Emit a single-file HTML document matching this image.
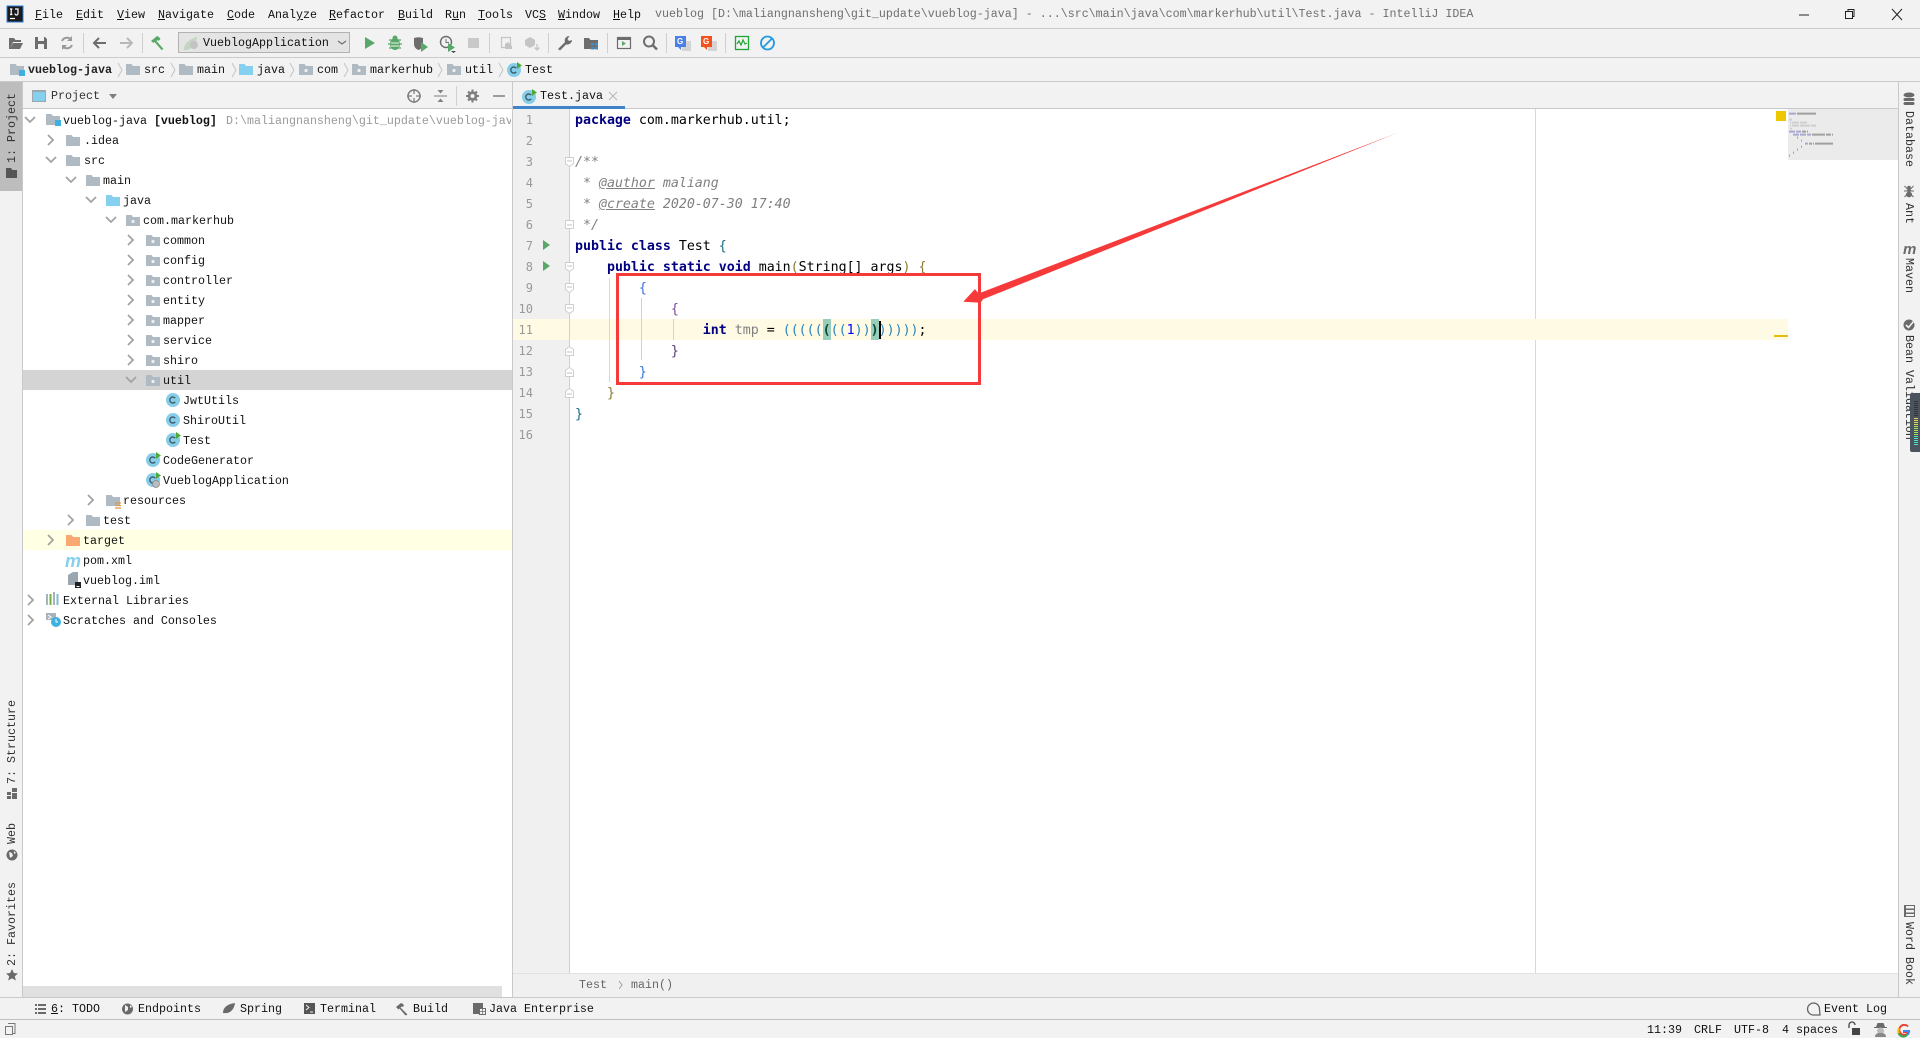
<!DOCTYPE html>
<html><head><meta charset="utf-8"><title>IntelliJ IDEA</title>
<style>
html,body{margin:0;padding:0;width:1920px;height:1038px;overflow:hidden;background:#f2f2f2}
body{position:relative;font:11.67px/20px "Liberation Mono",monospace;color:#111}
.b{position:absolute}
.t{position:absolute;white-space:pre;line-height:20px;height:20px}
.c{position:absolute;left:575px;white-space:pre;font:13.28px/21px "DejaVu Sans Mono",monospace;color:#000;height:21px}
.n{position:absolute;width:20px;left:513px;text-align:right;font:12px/21px "DejaVu Sans Mono",monospace;color:#999;height:21px}
.k{color:#000080;font-weight:bold}
.d{color:#808080;font-style:italic}
.g{color:#808080;font-style:italic;text-decoration:underline}
.v{position:absolute;white-space:pre;writing-mode:vertical-rl;line-height:16px;width:16px}
.l{transform:rotate(180deg)}
u{text-underline-offset:1px}
svg{position:absolute;left:0;top:0}
</style></head><body>
<!-- bands -->
<div class="b" style="left:0;top:28px;width:1920px;height:1px;background:#cacaca"></div>
<div class="b" style="left:0;top:57px;width:1920px;height:1px;background:#cacaca"></div>
<div class="b" style="left:0;top:81px;width:1920px;height:1px;background:#cacaca"></div>
<div class="b" style="left:0;top:82px;width:22px;height:109px;background:#bdbdbd"></div>
<div class="b" style="left:22px;top:82px;width:1px;height:915px;background:#c9c9c9"></div>
<div class="b" style="left:23px;top:109px;width:489px;height:888px;background:#fff"></div>
<div class="b" style="left:23px;top:108px;width:1875px;height:1px;background:#c9c9c9"></div>
<div class="b" style="left:512px;top:82px;width:1px;height:915px;background:#c9c9c9"></div>
<div class="b" style="left:1898px;top:82px;width:1px;height:915px;background:#c9c9c9"></div>
<div class="b" style="left:23px;top:370px;width:489px;height:20px;background:#d4d4d4"></div>
<div class="b" style="left:23px;top:530px;width:489px;height:20px;background:#ffffe4"></div>
<div class="b" style="left:23px;top:986px;width:479px;height:11px;background:#e0e0e0"></div>
<!-- editor -->
<div class="b" style="left:513px;top:109px;width:1385px;height:864px;background:#fff"></div>
<div class="b" style="left:513px;top:109px;width:56px;height:864px;background:#f0f0f0"></div>
<div class="b" style="left:569px;top:109px;width:1px;height:864px;background:#d0d0d0"></div>
<div class="b" style="left:1535px;top:109px;width:1px;height:864px;background:#d8d8d8"></div>
<div class="b" style="left:513px;top:319px;width:1275px;height:21px;background:#fffae3"></div>
<div class="b" style="left:569px;top:319px;width:1px;height:21px;background:#d0d0d0"></div>
<div class="b" style="left:513px;top:973px;width:1385px;height:24px;background:#f0f0f0;border-top:1px solid #e2e2e2;box-sizing:border-box"></div>
<div class="b" style="left:0;top:997px;width:1920px;height:1px;background:#c9c9c9"></div>
<div class="b" style="left:0;top:1019px;width:1920px;height:1px;background:#c0c0c0"></div>
<!-- tab -->
<div class="b" style="left:513px;top:106px;width:112px;height:3px;background:#4083c9"></div>
<!-- combo -->
<div class="b" style="left:178px;top:32px;width:172px;height:21px;background:#e4e4e4;border:1px solid #b2b2b2;box-sizing:border-box"></div>
<!-- brace highlights, guides, minimap base -->
<div class="b" style="left:823px;top:319px;width:8px;height:21px;background:#99ccbb"></div>
<div class="b" style="left:871px;top:319px;width:8px;height:21px;background:#99ccbb"></div>
<div class="b" style="left:609px;top:278px;width:1px;height:104px;background:#d8d8d8"></div>
<div class="b" style="left:641px;top:298px;width:1px;height:62px;background:#c5d3e2"></div>
<div class="b" style="left:673px;top:319px;width:1px;height:21px;background:#d4d4c8"></div>
<div class="b" style="left:1788px;top:109px;width:110px;height:51px;background:#ebebeb"></div>
<div class="b" style="left:1776px;top:111px;width:10px;height:10px;background:#edc800"></div>
<div class="b" style="left:1774px;top:335px;width:14px;height:2px;background:#e6bd0e"></div>

<!-- title bar -->
<div class="t" style="left:35px;top:5px"><u>F</u>ile</div>
<div class="t" style="left:76px;top:5px"><u>E</u>dit</div>
<div class="t" style="left:117px;top:5px"><u>V</u>iew</div>
<div class="t" style="left:158px;top:5px"><u>N</u>avigate</div>
<div class="t" style="left:227px;top:5px"><u>C</u>ode</div>
<div class="t" style="left:268px;top:5px">Anal<u>y</u>ze</div>
<div class="t" style="left:329px;top:5px"><u>R</u>efactor</div>
<div class="t" style="left:398px;top:5px"><u>B</u>uild</div>
<div class="t" style="left:445px;top:5px">R<u>u</u>n</div>
<div class="t" style="left:478px;top:5px"><u>T</u>ools</div>
<div class="t" style="left:525px;top:5px">VC<u>S</u></div>
<div class="t" style="left:558px;top:5px"><u>W</u>indow</div>
<div class="t" style="left:613px;top:5px"><u>H</u>elp</div>
<div class="t" style="left:655px;top:4px;color:#6f6f6f">vueblog [D:\maliangnansheng\git_update\vueblog-java] - ...\src\main\java\com\markerhub\util\Test.java - IntelliJ IDEA</div>

<!-- combo text -->
<div class="t" style="left:203px;top:33px">VueblogApplication</div>

<!-- nav bar -->
<div class="t" style="left:28px;top:60px;font-weight:bold;color:#222">vueblog-java</div>
<div class="t" style="left:144px;top:60px">src</div>
<div class="t" style="left:197px;top:60px">main</div>
<div class="t" style="left:257px;top:60px">java</div>
<div class="t" style="left:317px;top:60px">com</div>
<div class="t" style="left:370px;top:60px">markerhub</div>
<div class="t" style="left:465px;top:60px">util</div>
<div class="t" style="left:525px;top:60px">Test</div>

<!-- project header -->
<div class="t" style="left:51px;top:86px;color:#333">Project</div>
<div class="t" style="left:540px;top:86px">Test.java</div>

<!-- tree -->
<div class="b" style="left:0;top:1px">
<div class="t" style="left:63px;top:110px">vueblog-java <b>[vueblog]</b></div>
<div class="t" style="left:226px;top:110px;width:285px;overflow:hidden;color:#9a9a9a">D:\maliangnansheng\git_update\vueblog-java</div>
<div class="t" style="left:84px;top:130px">.idea</div>
<div class="t" style="left:84px;top:150px">src</div>
<div class="t" style="left:103px;top:170px">main</div>
<div class="t" style="left:123px;top:190px">java</div>
<div class="t" style="left:143px;top:210px">com.markerhub</div>
<div class="t" style="left:163px;top:230px">common</div>
<div class="t" style="left:163px;top:250px">config</div>
<div class="t" style="left:163px;top:270px">controller</div>
<div class="t" style="left:163px;top:290px">entity</div>
<div class="t" style="left:163px;top:310px">mapper</div>
<div class="t" style="left:163px;top:330px">service</div>
<div class="t" style="left:163px;top:350px">shiro</div>
<div class="t" style="left:163px;top:370px">util</div>
<div class="t" style="left:183px;top:390px">JwtUtils</div>
<div class="t" style="left:183px;top:410px">ShiroUtil</div>
<div class="t" style="left:183px;top:430px">Test</div>
<div class="t" style="left:163px;top:450px">CodeGenerator</div>
<div class="t" style="left:163px;top:470px">VueblogApplication</div>
<div class="t" style="left:123px;top:490px">resources</div>
<div class="t" style="left:103px;top:510px">test</div>
<div class="t" style="left:83px;top:530px">target</div>
<div class="t" style="left:83px;top:550px">pom.xml</div>
<div class="t" style="left:83px;top:570px">vueblog.iml</div>
<div class="t" style="left:63px;top:590px">External Libraries</div>
<div class="t" style="left:63px;top:610px">Scratches and Consoles</div>
</div>

<!-- gutter numbers -->
<div class="n" style="top:110px">1</div>
<div class="n" style="top:131px">2</div>
<div class="n" style="top:152px">3</div>
<div class="n" style="top:173px">4</div>
<div class="n" style="top:194px">5</div>
<div class="n" style="top:215px">6</div>
<div class="n" style="top:236px">7</div>
<div class="n" style="top:257px">8</div>
<div class="n" style="top:278px">9</div>
<div class="n" style="top:299px">10</div>
<div class="n" style="top:320px">11</div>
<div class="n" style="top:341px">12</div>
<div class="n" style="top:362px">13</div>
<div class="n" style="top:383px">14</div>
<div class="n" style="top:404px">15</div>
<div class="n" style="top:425px">16</div>

<!-- code -->
<div class="b" style="left:0;top:1px">
<div class="c" style="top:109px"><span class="k">package</span> com.markerhub.util;</div>
<div class="c" style="top:151px"><span class="d">/**</span></div>
<div class="c" style="top:172px"><span class="d"> * </span><span class="g">@author</span><span class="d"> maliang</span></div>
<div class="c" style="top:193px"><span class="d"> * </span><span class="g">@create</span><span class="d"> 2020-07-30 17:40</span></div>
<div class="c" style="top:214px"><span class="d"> */</span></div>
<div class="c" style="top:235px"><span class="k">public class</span> Test <span style="color:#1b6a86">{</span></div>
<div class="c" style="top:256px">    <span class="k">public static void</span> main<span style="color:#8a7a30">(</span>String[] args<span style="color:#8a7a30">)</span> <span style="color:#8a7a30">{</span></div>
<div class="c" style="top:277px">        <span style="color:#3a70d8">{</span></div>
<div class="c" style="top:298px">            <span style="color:#7a4a9a">{</span></div>
<div class="c" style="top:319px">                <span class="k">int</span> <span style="color:#808080">tmp</span> = <span style="color:#2b84bd">(((((</span><b style="color:#0b4a3a">(</b><span style="color:#2b84bd">((</span><span style="color:#0000ff">1</span><span style="color:#2b84bd">))</span><b style="color:#0b4a3a">)</b><span style="color:#2b84bd">)))))</span>;</div>
<div class="c" style="top:340px">            <span style="color:#5a3a7a">}</span></div>
<div class="c" style="top:361px">        <span style="color:#3a70d8">}</span></div>
<div class="c" style="top:382px">    <span style="color:#8a7a30">}</span></div>
<div class="c" style="top:403px"><span style="color:#1b6a86">}</span></div>
</div>
<div class="b" style="left:879px;top:321px;width:2px;height:18px;background:#000"></div>

<!-- breadcrumb -->
<div class="t" style="left:579px;top:975px;color:#666">Test</div>
<div class="t" style="left:631px;top:975px;color:#666">main()</div>

<!-- bottom tool bar -->
<div class="t" style="left:51px;top:999px"><u>6</u>: TODO</div>
<div class="t" style="left:138px;top:999px">Endpoints</div>
<div class="t" style="left:240px;top:999px">Spring</div>
<div class="t" style="left:320px;top:999px">Terminal</div>
<div class="t" style="left:413px;top:999px">Build</div>
<div class="t" style="left:489px;top:999px">Java Enterprise</div>
<div class="t" style="left:1824px;top:999px">Event Log</div>

<!-- status -->
<div class="t" style="left:1647px;top:1020px">11:39</div>
<div class="t" style="left:1694px;top:1020px">CRLF</div>
<div class="t" style="left:1734px;top:1020px">UTF-8</div>
<div class="t" style="left:1782px;top:1020px">4 spaces</div>

<!-- left vertical -->
<div class="v l" style="left:4px;top:93px;color:#333">1: Project</div>
<div class="v l" style="left:4px;top:700px;color:#333">7: Structure</div>
<div class="v l" style="left:4px;top:823px;color:#333">Web</div>
<div class="v l" style="left:4px;top:882px;color:#333">2: Favorites</div>

<!-- right vertical -->
<div class="v" style="left:1901px;top:111px;color:#333">Database</div>
<div class="v" style="left:1901px;top:203px;color:#333">Ant</div>
<div class="v" style="left:1901px;top:258px;color:#333">Maven</div>
<div class="v" style="left:1901px;top:335px;color:#333">Bean Validation</div>
<div class="v" style="left:1901px;top:922px;color:#333">Word Book</div>

<svg width="1920" height="1038" viewBox="0 0 1920 1038">
<defs>
<path id="f" d="M0 0h5.5L7 2h7v9H0z" fill="#b0bac2"/>
<g id="p"><path d="M0 0h5.5L7 2h7v9H0z" fill="#b0bac2"/><circle cx="7" cy="6.5" r="1.6" fill="#f0f0f0"/></g>
<path id="j" d="M0 0h5.5L7 2h7v9H0z" fill="#85d0ee"/>
<g id="m"><path d="M0 0h5.5L7 2h7v9H0z" fill="#b0bac2"/><rect x="9" y="6" width="6" height="6" fill="#3eb1e0"/></g>
<path id="ar" d="M0 0l5 5-5 5" fill="none" stroke="#a3a3a3" stroke-width="1.8"/>
<path id="ad" d="M0 0l5 5 5-5" fill="none" stroke="#a3a3a3" stroke-width="1.8"/>
<path id="ch" d="M0 0l4 7-4 7" fill="none" stroke="#c4c4c4" stroke-width="1"/>
<g id="c"><circle cx="7" cy="7" r="7" fill="#86cde9"/><path d="M9.2 5.2A3 3 0 1 0 9.2 8.8" fill="none" stroke="#3f5d6b" stroke-width="1.4"/></g>
<g id="r"><circle cx="7" cy="7" r="7" fill="#86cde9"/><path d="M9.2 5.2A3 3 0 1 0 9.2 8.8" fill="none" stroke="#3f5d6b" stroke-width="1.4"/><path d="M10-1l5 3.5-5 3.500z" fill="#4eaa3a"/></g>
</defs>

<!-- app logo -->
<rect x="7" y="6" width="16" height="16" fill="#1b1b1b" stroke="#2e7bd6" stroke-width="1"/>
<path d="M10 9h2.4M11.2 9v5.5M10 14.5h2.4M15 9h3v4.5a1.3 1.3 0 0 1-3 0M10 18.5h5" stroke="#fff" stroke-width="1.2" fill="none"/>
<!-- window controls -->
<path d="M1799 15h10" stroke="#222" stroke-width="1"/>
<path d="M1845.500 11.500h7v7h-7zM1848 11V9.500h6v7h-1.500" fill="none" stroke="#222"/>
<path d="M1892 9l10 11M1902 9l-10 11" stroke="#222"/>

<!-- toolbar -->
<path d="M9 38h5l1.500 2H21v2H13l-3 7H9zM13 43h10l-3 6H10z" fill="#6d6d6d"/>
<path d="M35 37h10l2 2v10H35z" fill="#6d6d6d"/><rect x="38" y="37" width="6" height="4" fill="#f2f2f2"/><rect x="38" y="44" width="6" height="5" fill="#f2f2f2"/>
<path d="M71.500 40a5.500 5.500 0 0 0-9.500 1M62.500 46a5.500 5.500 0 0 0 9.500-1" fill="none" stroke="#9a9a9a" stroke-width="2"/><path d="M72 36v5h-5zM62 50v-5h5z" fill="#9a9a9a"/>
<rect x="83" y="33" width="1" height="20" fill="#cfcfcf"/>
<path d="M106 43H94M99 38l-5 5 5 5" fill="none" stroke="#6d6d6d" stroke-width="2"/>
<path d="M120 43h12M127 38l5 5-5 5" fill="none" stroke="#b8b8b8" stroke-width="2"/>
<rect x="142" y="33" width="1" height="20" fill="#cfcfcf"/>
<path d="M151 41l6-5 2 1 1.500 2-2 2-1-1-1 1 7 8-2 1-7-8-1 1z" fill="#59a869"/>
<!-- combo icon -->
<path d="M184 50c0-7 6-11 13-13-1 8-5 13-13 13z" fill="#c2d6c2"/><circle cx="194" cy="45" r="4" fill="#c4c4c4"/>
<path d="M338 41l4 3 4-3" fill="none" stroke="#707070" stroke-width="1.200"/>
<path d="M365 37l10 6-10 6z" fill="#59a869"/>
<ellipse cx="395" cy="44" rx="5" ry="6" fill="#59a869"/><circle cx="395" cy="38" r="2.500" fill="#59a869"/><path d="M389 40l12 0M388 44h14M389 48h12" stroke="#59a869" stroke-width="1.300"/><path d="M391 43h8M391 46h8" stroke="#f2f2f2"/>
<path d="M414 38c3-1 6-1 9 0v6c0 3-2 5-4.500 6-2.500-1-4.500-3-4.500-6z" fill="#6d6d6d"/><path d="M421 42l7 5-7 5z" fill="#59a869"/>
<circle cx="446" cy="42" r="5.500" fill="none" stroke="#6d6d6d" stroke-width="1.400"/><path d="M446 39v3.500h3" stroke="#6d6d6d" fill="none"/><path d="M448 43l7 4.500-7 4.500z" fill="#59a869"/><path d="M451 51h5l-2.500 2z" fill="#444"/>
<rect x="468" y="38" width="11" height="10" fill="#c9c9c9"/>
<rect x="489" y="33" width="1" height="20" fill="#cfcfcf"/>
<path d="M501.500 37.500h9v10h-9z" fill="none" stroke="#c4c4c4" stroke-width="1.200"/><path d="M505 44l3-2 4 4v3h-7z" fill="#c4c4c4"/>
<path d="M525 40l5-3 5 3v5l-5 3-5-3z" fill="#c4c4c4"/><path d="M537 44v6m-2.500-2.500 2.500 2.500 2.500-2.500" stroke="#c4c4c4" fill="none" stroke-width="1.300"/>
<rect x="548" y="33" width="1" height="20" fill="#cfcfcf"/>
<path d="M558 49l7-7c-1-3 1-6 4.500-6l-2 3 1.500 2 3-1c0 3-3 5-6 4.500l-6 6z" fill="#6d6d6d"/>
<path d="M584 38h5l1.500 2H598v9h-14z" fill="#6d6d6d"/><path d="M591 43h3v2.500h-3zM595 43h3v2.500h-3zM591 47h3v2.500h-3zM595 47h3v2.500h-3z" fill="#3c8fd0"/>
<rect x="607" y="33" width="1" height="20" fill="#cfcfcf"/>
<rect x="617.500" y="37.500" width="13" height="11" fill="none" stroke="#6d6d6d" stroke-width="1.200"/><path d="M617 39h14" stroke="#6d6d6d" stroke-width="2"/><path d="M622 41l4 2.500-4 2.500z" fill="#59a869"/>
<circle cx="649" cy="41.500" r="5" fill="none" stroke="#6d6d6d" stroke-width="2"/><path d="M652.500 45l4.500 4.500" stroke="#6d6d6d" stroke-width="2.500"/>
<rect x="666" y="33" width="1" height="20" fill="#cfcfcf"/>
<rect x="682" y="41" width="9" height="10" fill="#d4d4d4"/><path d="M675 36h11v11h-5v3l-3-3h-3z" fill="#4a80e8"/><text x="677" y="44" font-family="Liberation Sans,sans-serif" font-size="8" font-weight="bold" fill="#fff">G</text>
<rect x="708" y="41" width="9" height="10" fill="#d4d4d4"/><path d="M701 36h11v11h-5v3l-3-3h-3z" fill="#f4511e"/><text x="703" y="44" font-family="Liberation Sans,sans-serif" font-size="8" font-weight="bold" fill="#fff">G</text>
<rect x="725" y="33" width="1" height="20" fill="#cfcfcf"/>
<rect x="735.500" y="36.500" width="13" height="13" fill="none" stroke="#1fa637" stroke-width="1.300"/><path d="M737 44l2-3 2 4 2-5 2 4 2-1" fill="none" stroke="#1fa637" stroke-width="1.200"/>
<circle cx="767.500" cy="43" r="6.500" fill="none" stroke="#1e9ae0" stroke-width="1.800"/><path d="M763 47.500l9-9" stroke="#1e9ae0" stroke-width="1.800"/>

<!-- nav icons -->
<use href="#m" x="10" y="64"/><use href="#ch" x="118" y="63"/>
<use href="#f" x="126" y="64"/><use href="#ch" x="171" y="63"/>
<use href="#f" x="179" y="64"/><use href="#ch" x="232" y="63"/>
<use href="#j" x="239" y="64"/><use href="#ch" x="290" y="63"/>
<use href="#p" x="299" y="64"/><use href="#ch" x="344" y="63"/>
<use href="#p" x="352" y="64"/><use href="#ch" x="438" y="63"/>
<use href="#p" x="447" y="64"/><use href="#ch" x="499" y="63"/>
<use href="#r" x="507" y="63"/>

<!-- project header icons -->
<rect x="32.500" y="90.500" width="13" height="11" fill="#85d0ee" stroke="#9aa7b0"/><rect x="33" y="90" width="12" height="2" fill="#9aa7b0"/>
<path d="M109 94h8l-4 5z" fill="#7f7f7f"/>
<circle cx="414" cy="96" r="6" fill="none" stroke="#7f7f7f" stroke-width="1.500"/><path d="M414 89v5M414 98v5M407 96h5M416 96h5" stroke="#7f7f7f" stroke-width="1.300"/>
<path d="M434 96h13" stroke="#7f7f7f" stroke-width="1"/><path d="M437.500 90h6l-3 3.500zM437.500 102h6l-3-3.500z" fill="#7f7f7f"/>
<rect x="456" y="86" width="1" height="20" fill="#d0d0d0"/>
<path d="M472.500 89.500v13M466 96h13M468 91.500l9 9M477 91.500l-9 9" stroke="#7f7f7f" stroke-width="2"/><circle cx="472.500" cy="96" r="4.800" fill="#7f7f7f"/><circle cx="472.500" cy="96" r="2" fill="#f2f2f2"/>
<path d="M493 96h12" stroke="#7f7f7f" stroke-width="1.500"/>
<!-- tab icons -->
<use href="#r" x="522" y="90"/>
<path d="M609 92l8 8M617 92l-8 8" stroke="#b8b8b8"/>

<!-- tree icons -->
<use href="#ad" x="25" y="117"/><use href="#m" x="46" y="114"/>
<use href="#ar" x="48" y="135"/><use href="#f" x="66" y="135"/>
<use href="#ad" x="46" y="157"/><use href="#f" x="66" y="155"/>
<use href="#ad" x="66" y="177"/><use href="#f" x="86" y="175"/>
<use href="#ad" x="86" y="197"/><use href="#j" x="106" y="195"/>
<use href="#ad" x="106" y="217"/><use href="#p" x="126" y="215"/>
<use href="#ar" x="128" y="235"/><use href="#p" x="146" y="235"/>
<use href="#ar" x="128" y="255"/><use href="#p" x="146" y="255"/>
<use href="#ar" x="128" y="275"/><use href="#p" x="146" y="275"/>
<use href="#ar" x="128" y="295"/><use href="#p" x="146" y="295"/>
<use href="#ar" x="128" y="315"/><use href="#p" x="146" y="315"/>
<use href="#ar" x="128" y="335"/><use href="#p" x="146" y="335"/>
<use href="#ar" x="128" y="355"/><use href="#p" x="146" y="355"/>
<use href="#ad" x="126" y="377"/><use href="#p" x="146" y="375"/>
<use href="#c" x="166" y="393"/><use href="#c" x="166" y="413"/><use href="#r" x="166" y="433"/>
<use href="#r" x="146" y="453"/><use href="#r" x="146" y="473"/>
<circle cx="156" cy="484" r="3.500" fill="#bbb" stroke="#888" stroke-width=".8"/>
<use href="#ar" x="88" y="495"/><use href="#f" x="106" y="495"/>
<path d="M115 503h6M115 505.500h6M115 508h6" stroke="#d9974a" stroke-width="1.200"/>
<use href="#ar" x="68" y="515"/><use href="#f" x="86" y="515"/>
<use href="#ar" x="48" y="535"/><path d="M66 535h5.500l1.500 2h7v9H66z" fill="#f9a871"/>
<text x="65" y="567" font-family="Liberation Sans,sans-serif" font-size="18" font-weight="bold" font-style="italic" fill="#85d0ee">m</text>
<path d="M68 575l5-3h5v13H68z" fill="#9aa7b0"/><rect x="75" y="582" width="6" height="6" fill="#222"/><rect x="76.500" y="586" width="3" height="1" fill="#fff"/>
<use href="#ar" x="28" y="595"/>
<path d="M47 594v11" stroke="#a8b4bc" stroke-width="2"/><path d="M50.500 594v11" stroke="#6db33f" stroke-width="2"/><path d="M54 592v13" stroke="#a8b4bc" stroke-width="2"/><path d="M57.500 594v11" stroke="#85b8d8" stroke-width="2"/>
<use href="#ar" x="28" y="615"/>
<path d="M46 613h10v7H46z" fill="#a8b4bc"/><path d="M48 615l3 2-3 2" stroke="#fff" fill="none"/><circle cx="56" cy="622" r="5" fill="#3eb1e0"/><path d="M56 619v3h2" stroke="#fff" fill="none"/>

<!-- gutter run + folds -->
<path d="M543 240l7 5-7 5z" fill="#59a869"/><path d="M543 261l7 5-7 5z" fill="#59a869"/>
<g fill="#fff" stroke="#cfcfcf">
<path d="M565.500 157.500h8v6l-4 3-4-3z"/><path d="M565.500 220.500h8v8h-8z"/>
<path d="M565.500 262.500h8v6l-4 3-4-3z"/><path d="M565.500 283.500h8v6l-4 3-4-3z"/><path d="M565.500 304.500h8v6l-4 3-4-3z"/>
<path d="M565.500 349.500l4-3 4 3v6h-8z"/><path d="M565.500 370.500l4-3 4 3v6h-8z"/><path d="M565.500 391.500l4-3 4 3v6h-8z"/>
</g>
<path d="M567 161h5M567 225h5M567 266h5M567 287h5M567 308h5M567 352h5M567 373h5M567 394h5" stroke="#c0c0c0"/>

<!-- left strip icons -->
<path d="M6 168h5l1.500 2H17v8H6z" fill="#555"/>
<path d="M7 792h4v3H7zM12 788h5v4h-5zM7 796h4v3H7zM12 793h5v6h-5z" fill="#6a6a6a"/>
<circle cx="12" cy="855" r="5.500" fill="#6a6a6a"/><path d="M9 852l3 1 1 3-3 2zM14 851l2 2-2 1z" fill="#f2f2f2"/>
<path d="M12 969l1.800 4 4.200.5-3.200 2.800 1 4.200-3.800-2.200-3.800 2.200 1-4.200L6 973.500l4.200-.5z" fill="#6a6a6a"/>

<!-- right strip icons -->
<g fill="#6a6a6a"><ellipse cx="1909" cy="95" rx="5.500" ry="2.500"/><rect x="1903.500" y="98" width="11" height="3" rx="1.500"/><rect x="1903.500" y="102" width="11" height="3" rx="1.500"/></g>
<g fill="#6a6a6a"><circle cx="1909" cy="187.500" r="1.800"/><ellipse cx="1909" cy="190.500" rx="2.200" ry="1.500"/><ellipse cx="1909" cy="194.500" rx="3" ry="2.800"/></g>
<path d="M1904.500 186l3 3M1913.500 186l-3 3M1904 191h10M1904.500 197l3-3M1913.500 197l-3-3" stroke="#6a6a6a"/>
<text x="1903" y="254" font-family="Liberation Sans,sans-serif" font-size="15" font-weight="bold" font-style="italic" fill="#6a6a6a">m</text>
<circle cx="1909" cy="325" r="5.500" fill="#6a6a6a"/><path d="M1906 325l2.500 2.500 5-6" fill="none" stroke="#f2f2f2" stroke-width="1.600"/>
<path d="M1904 905h11v12h-11z" fill="#6a6a6a"/><path d="M1906 906h8v2.500h-8zM1906 910h8v2.500h-8zM1906 914h8v2h-8z" fill="#f2f2f2"/>

<!-- memory widget -->
<path d="M1920 393h-8a2 2 0 0 0-2 2v55a2 2 0 0 0 2 2h8z" fill="#4c5360"/>
<g stroke-width="1">
<path d="M1914 401.500h4M1914 403.500h4M1914 405.500h4M1914 407.500h4M1914 409.500h4M1914 411.500h4M1914 413.500h4M1914 415.500h4" stroke="#333"/>
<path d="M1914 418.500h4M1914 420.500h4M1914 422.500h4M1914 424.500h4" stroke="#e3d94a"/>
<path d="M1914 426.500h4M1914 428.500h4M1914 430.500h4M1914 432.500h4M1914 434.500h4" stroke="#a6e25a"/>
<path d="M1914 436.500h4M1914 438.500h4M1914 440.500h4M1914 442.500h4M1914 444.500h4" stroke="#4fe3b8"/>
</g>

<!-- minimap -->
<g transform="translate(1740 80) scale(.33333)">
<path d="M147 98h21v6h-21zM147 152h18v6h-18zM168 152h15v6h-15zM159 161h18v6h-18zM180 161h18v6h-18zM201 161h12v6h-12zM195 188h9v6h-9z" fill="#a9a9d0"/>
<path d="M171 98h57v6h-57zM186 152h12v6h-12zM201 152h3v6h-3zM216 161h39v6h-39zM258 161h15v6h-15zM276 161h3v6h-3zM171 170h3v6h-3zM183 179h3v6h-3zM207 188h9v6h-9zM219 188h3v6h-3zM225 188h54v6h-54zM183 197h3v6h-3zM171 206h3v6h-3zM159 215h3v6h-3zM147 224h3v6h-3z" fill="#a0a0a0"/>
<path d="M147 116h9v6h-9zM150 125h3v6h-3zM156 125h21v6h-21zM180 125h21v6h-21zM150 134h3v6h-3zM156 134h21v6h-21zM180 134h30v6h-30zM213 134h15v6h-15zM150 143h6v6h-6z" fill="#cfcfcf"/>
</g>

<!-- breadcrumb chevron -->
<path d="M619 981l3 4-3 4" fill="none" stroke="#a0a0a0"/>

<!-- bottom tool icons -->
<path d="M35 1004h2v2h-2zM35 1008h2v2h-2zM35 1012h2v2h-2zM38 1004h8v2h-8zM38 1008h8v2h-8zM38 1012h8v2h-8z" fill="#6a6a6a"/>
<circle cx="127.500" cy="1009" r="5.500" fill="#6a6a6a"/><path d="M125 1005l3 2 0 3-3 2zM130 1005l2 2-2 1z" fill="#f2f2f2"/>
<path d="M223 1013c0-6 5-9 12-10-1 7-5 11-12 10z" fill="#6a6a6a"/>
<rect x="304" y="1003" width="11" height="11" fill="#555"/><path d="M306 1005l3 2.500-3 2.500M310 1012h3" stroke="#f2f2f2" fill="none"/>
<path d="M396 1007l5-4 2 1 1 1.500-1.500 1.500-1-.5-1 1 7 7-2 1-6-7-1 1z" fill="#6a6a6a"/>
<path d="M473 1003h10v5h-3v6h-7z" fill="#6a6a6a"/><rect x="479.500" y="1008.500" width="6" height="6" fill="#f2f2f2" stroke="#6a6a6a"/><path d="M482.500 1009v5M480 1011.500h5" stroke="#6a6a6a" stroke-width=".7"/>
<path d="M1820 1015h-7a6 6 0 1 1 6.500-5.500z" fill="none" stroke="#666" stroke-width="1.300"/>

<!-- status icons -->
<path d="M8 1023.500h7v10H8" fill="none" stroke="#777"/><path d="M5.500 1026.500h7v8h-7z" fill="#f2f2f2" stroke="#777"/>
<path d="M1849 1028v-3a3 3 0 0 1 6 0" fill="none" stroke="#444" stroke-width="1.300"/><rect x="1852" y="1028" width="8" height="7" fill="#444"/>
<path d="M1876 1027l1.500-4h6l1.500 4h2v1h-13v-1z" fill="#6a6a6a"/><circle cx="1880.500" cy="1031" r="3.500" fill="#bbb"/><path d="M1875 1037c0-3 2-4 5.500-4s5.500 1 5.500 4z" fill="#888"/>
<path d="M1908 1026.500a5 5 0 1 0 .8 5.500H1903" fill="none" stroke="#e94235" stroke-width="2"/><path d="M1898.500 1030.500a5 5 0 0 0 9.500 3" fill="none" stroke="#34a853" stroke-width="2"/><path d="M1899 1033a5 5 0 0 1 0-5" fill="none" stroke="#fbbc05" stroke-width="2"/><path d="M1903 1031h6c0 1.500-.5 2.500-1 3.500" fill="none" stroke="#4285f4" stroke-width="2"/>

<!-- annotation -->
<rect x="617.500" y="274.500" width="362" height="109" fill="none" stroke="#f63a3a" stroke-width="3"/>
<path d="M963.300 301.700L975 289L978.500 293.500L1398 132.600L983 299.300L980.700 302.700Z" fill="#f63a3a"/>
</svg>
</body></html>
